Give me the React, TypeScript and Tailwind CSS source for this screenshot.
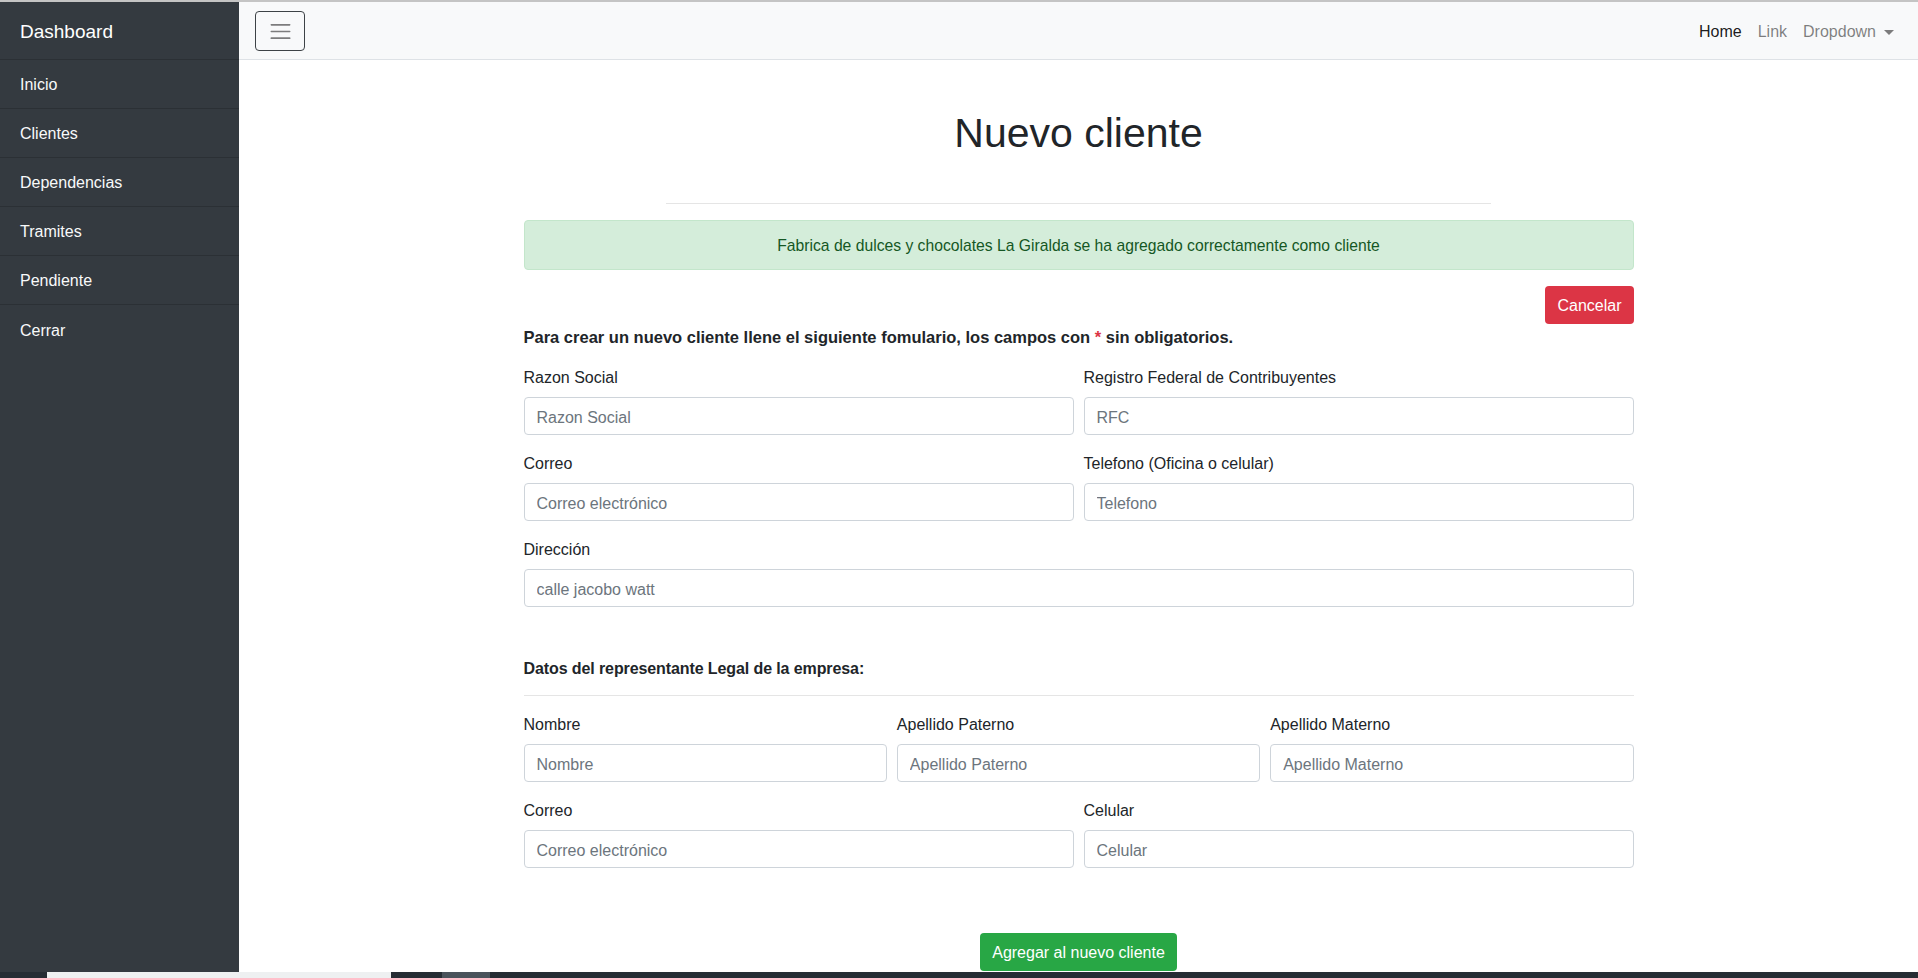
import React from "react";

function Field({ label, placeholder }: { label: string; placeholder: string }) {
  return (
    <div className="mb-4">
      <label className="block mb-[7px] pt-[1px] leading-6 text-base text-[#212529]">{label}</label>
      <input
        placeholder={placeholder}
        className="block w-full h-[38px] px-3 pt-[4px] border border-[#ced4da] rounded text-base text-[#495057] placeholder:text-[#6c757d] bg-white outline-none"
      />
    </div>
  );
}

export default function App() {
  const items = ["Inicio", "Clientes", "Dependencias", "Tramites", "Pendiente", "Cerrar"];
  return (
    <div className="w-[1918px] h-[978px] flex flex-col overflow-hidden bg-white font-['Liberation_Sans',Arial,sans-serif] text-[#212529]">
      <div className="h-[2px] shrink-0 bg-[#c4c4c4]" />
      <div className="flex flex-1 min-h-0">
        <aside className="w-[239px] shrink-0 bg-[#343a40] text-white">
          <div className="h-[58px] border-b border-[#2b3035] flex items-center px-5 pt-[3px] text-[19px] leading-6">
            Dashboard
          </div>
          {items.map((it, i) => (
            <div
              key={it}
              className={
                "h-[49px] flex items-center px-5 pt-[2px] text-base text-[#f8f9fa] " +
                (i < items.length - 1 ? "border-b border-[#2b3035]" : "")
              }
            >
              {it}
            </div>
          ))}
        </aside>
        <div className="flex-1 min-w-0 flex flex-col">
          <nav className="h-[58px] shrink-0 bg-[#f8f9fa] border-b border-[#dee2e6] flex items-start justify-between pt-[9px] pl-4 pr-4">
            <button className="w-[50px] h-[40px] border border-[#3d4246] rounded flex items-center justify-center">
              <svg width="25" height="25" viewBox="0 0 30 30">
                <path d="M4 7h22M4 15h22M4 23h22" stroke="rgba(0,0,0,0.5)" strokeWidth="2" strokeLinecap="round" fill="none" />
              </svg>
            </button>
            <div className="h-[40px] pt-[2px] flex items-center text-base leading-6">
              <a className="px-2 text-[rgba(0,0,0,0.9)]">Home</a>
              <a className="px-2 text-[rgba(0,0,0,0.5)]">Link</a>
              <a className="px-2 text-[rgba(0,0,0,0.5)] flex items-center">
                Dropdown
                <span className="inline-block w-0 h-0 ml-[8px] border-t-[5px] border-l-[5px] border-r-[5px] border-l-transparent border-r-transparent border-t-[rgba(0,0,0,0.5)]" />
              </a>
            </div>
          </nav>
          <main className="flex-1 min-h-0 overflow-hidden">
            <div className="w-[1110px] mx-auto">
              <h1 className="mt-[49px] text-[41px] leading-[48px] font-medium text-center text-[#212529]">Nuevo cliente</h1>
              <div className="mt-[46px] w-[825px] mx-auto border-t border-[#e5e5e5]" />
              <div className="mt-4 h-[50px] pt-[2px] bg-[#d4edda] border border-[#c3e6cb] rounded text-[#155724] text-[15.7px] flex items-center justify-center">
                Fabrica de dulces y chocolates La Giralda se ha agregado correctamente como cliente
              </div>
              <div className="mt-4 flex justify-end">
                <button className="h-[38px] px-3 pt-[2px] bg-[#dc3545] text-white rounded text-base">Cancelar</button>
              </div>
              <p className="font-bold text-[16.5px] leading-6 pt-[1px]">
                Para crear un nuevo cliente llene el siguiente fomulario, los campos con{" "}
                <span className="text-[#dc3545]">*</span> sin obligatorios.
              </p>
              <div className="mt-4 grid grid-cols-2 gap-x-[10px]">
                <Field label="Razon Social" placeholder="Razon Social" />
                <Field label="Registro Federal de Contribuyentes" placeholder="RFC" />
                <Field label="Correo" placeholder="Correo electrónico" />
                <Field label="Telefono (Oficina o celular)" placeholder="Telefono" />
              </div>
              <Field label="Dirección" placeholder="calle jacobo watt" />
              <div className="pt-[33px]">
                <p className="font-bold text-base tracking-[-0.1px] leading-6 pt-[1px]">Datos del representante Legal de la empresa:</p>
              </div>
              <div className="mt-[14px] mb-4 border-t border-[#e5e5e5]" />
              <div className="grid grid-cols-3 gap-x-[10px]">
                <Field label="Nombre" placeholder="Nombre" />
                <Field label="Apellido Paterno" placeholder="Apellido Paterno" />
                <Field label="Apellido Materno" placeholder="Apellido Materno" />
              </div>
              <div className="grid grid-cols-2 gap-x-[10px]">
                <Field label="Correo" placeholder="Correo electrónico" />
                <Field label="Celular" placeholder="Celular" />
              </div>
              <div className="mt-[49px] flex justify-center">
                <button className="h-[38px] px-3 pt-[2px] bg-[#28a745] text-white rounded text-base">Agregar al nuevo cliente</button>
              </div>
            </div>
          </main>
        </div>
      </div>
      <div className="h-[6px] shrink-0 flex bg-[#262d34]">
        <div className="w-[47px]" />
        <div className="w-[344px] bg-[#eef0f1]" />
        <div className="w-[51px]" />
        <div className="w-[48px] bg-[#4a535b]" />
      </div>
    </div>
  );
}
